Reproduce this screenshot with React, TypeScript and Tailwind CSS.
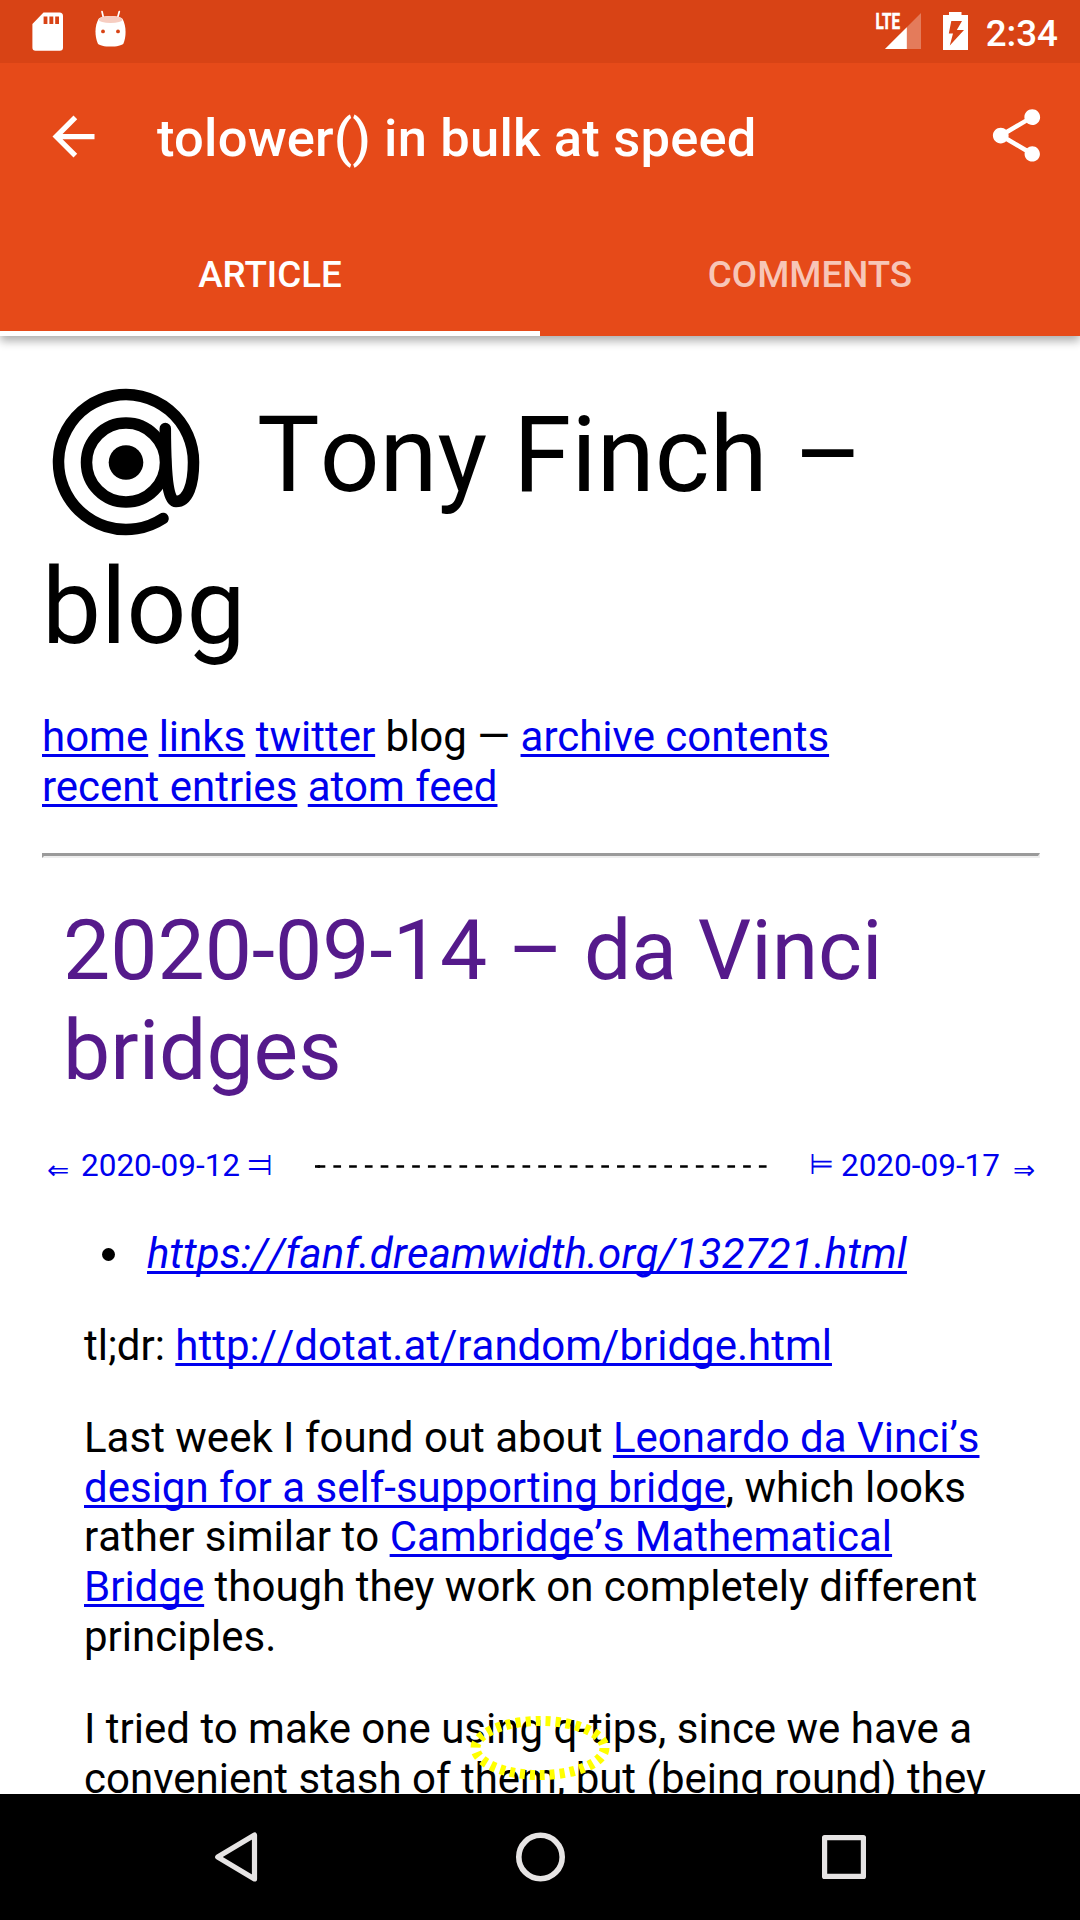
import React from "react";

const link = "text-[#0000ee] underline decoration-[3px] underline-offset-[3px] [text-decoration-skip-ink:none]";

function A({ children }: { children: React.ReactNode }) {
  return (
    <a href="#" className={link}>
      {children}
    </a>
  );
}

function StatusBar() {
  return (
    <div className="flex h-[63px] items-start bg-[#d84315] text-white">
      <svg className="ml-[32px] mt-[12px] h-[39px] w-[31px]" viewBox="0 0 31 39" fill="currentColor">
        <path
          fillRule="evenodd"
          d="M11.5.5H27.5a3.5 3.5 0 0 1 3.5 3.5V35.5a3.2 3.2 0 0 1-3.2 3.2H3.6A3.2 3.2 0 0 1 .4 35.5V12ZM11.6 4.5V12H15.4V4.5ZM17.4 4.5V12H21.3V4.5ZM23.2 4.5V12H27V4.5Z"
        />
      </svg>
      <svg className="ml-[32px] mt-[10px] h-[38px] w-[32px]" viewBox="95 10 32 38">
        <path d="M102 11.5L103.6 18.5M119.3 11.5L117.4 18.5" stroke="white" strokeWidth="1.7" strokeLinecap="round" />
        <path
          d="M98.5 19C101 15 120 15 122.6 19C126.4 26 126.4 36 123.5 43.5C121 47.6 100 47.6 97.8 43.5C94.6 36 94.6 26 98.5 19Z"
          fill="white"
        />
        <ellipse cx="110.6" cy="19.5" rx="12" ry="3.6" fill="#f6cdc1" />
        <circle cx="103" cy="31.4" r="1.9" fill="#d84315" />
        <circle cx="118" cy="31.4" r="1.9" fill="#d84315" />
      </svg>
      <svg className="ml-auto mt-[12px] h-[38px] w-[46px] overflow-visible" viewBox="876 12 46 38">
        <path d="M921 13V49H885Z" fill="white" fillOpacity="0.3" />
        <path d="M906.8 27.2V49H885Z" fill="white" />
        <path d="M876 12H900.5V30.5H876Z" fill="#d84315" />
        <text
          x="875.5"
          y="29"
          fill="white"
          stroke="white"
          strokeWidth="0.6"
          fontFamily="Roboto, sans-serif"
          fontWeight="700"
          fontSize="22"
          textLength="24.5"
          lengthAdjust="spacingAndGlyphs"
        >
          LTE
        </text>
      </svg>
      <svg className="ml-[21px] mt-[12px] h-[38px] w-[25px]" viewBox="943 12 25 38">
        <path
          fill="white"
          fillRule="evenodd"
          d="M949 12H961.5V15H968V50H943V15H949ZM951.3 21L948.8 33.5H953L949.8 45.5L964 30H956.800L962 21Z"
        />
      </svg>
      <span className="ml-[18px] mr-[22px] mt-[12px] text-[36.75px] font-medium leading-[43px]">2:34</span>
    </div>
  );
}

function Header() {
  return (
    <header className="relative z-10 h-[336px] bg-[#e64a19] font-[Roboto,sans-serif] text-white shadow-[0_5px_9px_0px_rgba(0,0,0,0.32)]">
      <StatusBar />
      <div className="flex h-[147px] items-start">
        <svg className="ml-[42px] mt-[42px] size-[63px]" viewBox="0 0 24 24" fill="currentColor">
          <path d="M20 11H7.83l5.59-5.59L12 4l-8 8 8 8 1.41-1.41L7.83 13H20v-2z" />
        </svg>
        <h1 className="ml-[52px] mt-[44px] whitespace-nowrap text-[52.5px] font-medium leading-[62px] tracking-[0.2px]">
          tolower() in bulk at speed
        </h1>
        <svg className="ml-auto mr-[32px] mt-[41px] size-[63px]" viewBox="0 0 24 24" fill="currentColor">
          <path d="M18 16.08c-.76 0-1.44.3-1.96.77L8.91 12.7c.05-.23.09-.46.09-.7s-.04-.47-.09-.7l7.05-4.11c.54.5 1.25.81 2.04.81 1.66 0 3-1.34 3-3s-1.34-3-3-3-3 1.34-3 3c0 .24.04.47.09.7L8.04 9.81C7.5 9.31 6.79 9 6 9c-1.66 0-3 1.34-3 3s1.34 3 3 3c.79 0 1.5-.31 2.04-.81l7.12 4.16c-.05.21-.08.43-.08.65 0 1.61 1.31 2.92 2.92 2.92 1.61 0 2.92-1.31 2.92-2.92s-1.31-2.92-2.92-2.92z" />
        </svg>
      </div>
      <nav className="grid h-[126px] grid-cols-2 text-center text-[36.75px] font-medium leading-[43px]">
        <div className="border-b-[5px] border-white pt-[43px]">ARTICLE</div>
        <div className="pt-[43px] text-white/70">COMMENTS</div>
      </nav>
    </header>
  );
}

function AtLogo() {
  return (
    <svg className="size-[168px] shrink-0" viewBox="0 -0.5 168 168" fill="none" stroke="black" strokeLinecap="round">
      <path
        strokeWidth="11.5"
        d="M121 140A67.5 67.5 0 1 1 151.5 84C151.5 106 146 123 134 123C127 123 123.5 106 123.3 50"
      />
      <circle cx="84" cy="84" r="39.5" strokeWidth="11.5" />
      <circle cx="84" cy="84" r="17.3" fill="black" stroke="none" />
    </svg>
  );
}

function PostNav() {
  return (
    <div className="mt-[47px] flex h-[37px] items-start whitespace-nowrap text-[31.5px] leading-[37px] text-[#0000ee]">
      <span className="w-[39px] pl-[5px] pt-[4px] font-['DejaVu_Sans',sans-serif] text-[26.5px]">⇐</span>
      <span>2020-09-12</span>
      <span className="ml-[8px] origin-center scale-y-[1.15] pt-[-2px] font-['DejaVu_Sans',sans-serif] text-[32.4px] leading-[32px]">
        ⫤
      </span>
      <svg className="absolute left-[315px] mt-[18px] h-[3px] w-[452px]" viewBox="0 0 452 3">
        <path d="M0 1.5H5" stroke="black" strokeWidth="2.6" />
        <path d="M2.6 1.5H452" stroke="black" strokeWidth="2.6" strokeDasharray="7.7 8.06" />
      </svg>
      <span className="ml-auto font-['DejaVu_Sans',sans-serif] text-[28.5px] leading-[35px]">⊨</span>
      <span className="ml-[7px]">2020-09-17</span>
      <span className="w-[38px] pl-[13px] pt-[4px] font-['DejaVu_Sans',sans-serif] text-[26.5px]">⇒</span>
    </div>
  );
}

function Article() {
  return (
    <main className="relative h-[1458px] overflow-hidden bg-white px-[42px] pt-[42px] font-[Roboto,sans-serif] text-[42px] leading-[49.875px] text-black">
      <div className="whitespace-nowrap text-[105px] leading-[123px] [font-kerning:none]">
        <div className="flex h-[168px] items-start">
          <AtLogo />
          <span className="ml-[47px] mt-[16px]">Tony Finch –</span>
        </div>
        <div>blog</div>
      </div>
      <p className="mt-[43px] whitespace-nowrap">
        <A>home</A> <A>links</A> <A>twitter</A> blog — <A>archive contents</A>
        <br />
        <A>recent entries</A> <A>atom feed</A>
      </p>
      <hr className="-mr-[2px] mt-[41px] h-[5px] border-b-2 border-l-2 border-r-2 border-t-[3px] border-b-[#eeeeee] border-l-[#9a9a9a] border-r-[#eeeeee] border-t-[#9a9a9a]" />
      <h2 className="ml-[21px] mt-[43px] whitespace-nowrap text-[84px] leading-[99.75px] text-[#551a8b]">
        2020-09-14 – da Vinci
        <br />
        bridges
      </h2>
      <PostNav />
      <ul className="ml-[60px] mt-[45px] flex items-center">
        <li className="flex items-center whitespace-nowrap">
          <span className="mr-[32px] size-[13px] rounded-full bg-black" />
          <em className="tracking-[0.18px] [font-kerning:none]">
            <A>https://fanf.dreamwidth.org/132721.html</A>
          </em>
        </li>
      </ul>
      <div className="ml-[42px] mt-[42px] flex flex-col gap-[42px] whitespace-nowrap">
        <p className="[font-kerning:none]">
          tl;dr: <A>http://dotat.at/random/bridge.html</A>
        </p>
        <p className="pb-[0.9px] leading-[49.7px]">
          Last week I found out about <span className="[font-kerning:none]"><A>Leonardo da Vinci’s</A></span>
          <br />
          <A>design for a self-supporting bridge</A>, which looks
          <br />
          <span className="[font-kerning:none]">
            rather similar to <A>Cambridge’s Mathematical</A>
          </span>
          <br />
          <A>Bridge</A> though they work on completely different
          <br />
          principles.
        </p>
        <p>
          I tried to make one using q-tips, since we have a
          <br />
          convenient stash of them, but (being round) they
        </p>
      </div>
      <svg className="absolute left-[470px] top-[1379px] h-[66px] w-[140px]" viewBox="0 0 140 66">
        <ellipse cx="70" cy="33" rx="64.5" ry="27" fill="none" stroke="#ffff00" strokeWidth="10" strokeDasharray="5 5" />
      </svg>
    </main>
  );
}

function SystemNav() {
  return (
    <footer className="flex h-[126px] items-center justify-between bg-black pl-[210px] pr-[209px]">
      <svg className="size-[54px]" viewBox="210 1830 54 54" fill="none" stroke="#e6e4e4" strokeWidth="5.2" strokeLinejoin="round">
        <path d="M254.5 1835V1879L217.7 1857Z" />
      </svg>
      <svg className="size-[54px]" viewBox="0.5 0 54 54" fill="none" stroke="#e6e4e4" strokeWidth="5.6">
        <circle cx="27" cy="27" r="21.7" />
      </svg>
      <svg className="size-[54px]" viewBox="0 0 54 54" fill="none" stroke="#e6e4e4" strokeWidth="5.2" strokeLinejoin="round">
        <path d="M7.6 7.6H46.4V46.4H7.6Z" />
      </svg>
    </footer>
  );
}

export default function App() {
  return (
    <div className="h-[1920px] w-[1080px] overflow-hidden bg-white">
      <Header />
      <Article />
      <SystemNav />
    </div>
  );
}
